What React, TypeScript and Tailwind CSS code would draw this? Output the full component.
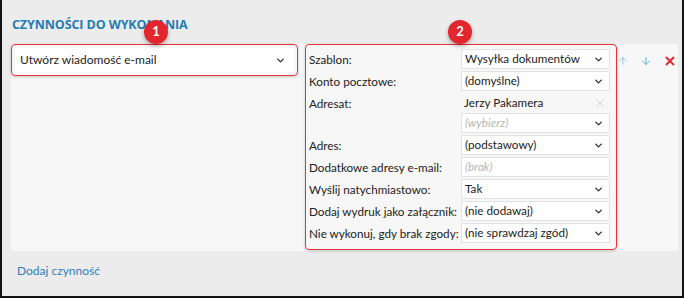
import { ChevronDown, ArrowUp, ArrowDown, X } from "lucide-react";

type Row = {
  label: string;
  value?: string;
  placeholder?: boolean;
  select?: boolean;
  plain?: boolean;
};

const rows: Row[] = [
  { label: "Szablon:", value: "Wysyłka dokumentów", select: true },
  { label: "Konto pocztowe:", value: "(domyślne)", select: true },
  { label: "Adresat:", value: "Jerzy Pakamera", plain: true },
  { label: "", value: "(wybierz)", placeholder: true, select: true },
  { label: "Adres:", value: "(podstawowy)", select: true },
  { label: "Dodatkowe adresy e-mail:", value: "(brak)", placeholder: true },
  { label: "Wyślij natychmiastowo:", value: "Tak", select: true },
  { label: "Dodaj wydruk jako załącznik:", value: "(nie dodawaj)", select: true },
  { label: "Nie wykonuj, gdy brak zgody:", value: "(nie sprawdzaj zgód)", select: true },
];

function Badge({ n }: { n: number }) {
  return (
    <div className="absolute w-[24px] h-[24px] rounded-full bg-[#e3262d] text-white text-[13px] font-bold flex items-center justify-center shadow-[0_2px_4px_rgba(0,0,0,0.3)]">
      {n}
    </div>
  );
}

function Field({ row }: { row: Row }) {
  if (row.plain) {
    return (
      <div className="h-[20px] flex items-center justify-between pl-[3px] pr-[3px] text-[#222]">
        <span>{row.value}</span>
        <X size={14} strokeWidth={1.1} className="text-[#c4c4c4]" />
      </div>
    );
  }
  return (
    <div className="h-[20px] bg-white border border-[#e3e3e3] flex items-center justify-between pl-[3px] pr-[5px]">
      <span className={row.placeholder ? "italic text-[#b5b5b5]" : "text-[#222]"}>{row.value}</span>
      {row.select && <ChevronDown size={11} strokeWidth={3} className="text-[#333]" />}
    </div>
  );
}

export default function App() {
  return (
    <div
      className="relative w-[684px] h-[298px] bg-[#ececec] border-x-2 border-b-2 border-[#111] text-[11.7px] overflow-hidden"
      style={{ fontFamily: 'Lato, "Open Sans", sans-serif' }}
    >
      <h2
        className="pl-[10px] pt-[17px] h-[44px] text-[12.5px] leading-[16px] font-bold text-[#1f7db5] tracking-[-0.1px]"
        style={{ fontFamily: '"Open Sans", sans-serif' }}
      >
        CZYNNOŚCI DO WYKONANIA
      </h2>

      <div className="ml-[9px] mr-[4px] h-[207px] bg-[#f7f7f7] flex items-start">
        {/* box 1 */}
        <div className="w-[287px] shrink-0 h-[32px] border-[1.5px] border-[#e8323a] rounded-[4px] p-[3px] shadow-[0_1px_3px_rgba(0,0,0,0.2)]">
          <div className="h-full bg-white flex items-center justify-between pl-[5px] pr-[8px] text-[#222] text-[12px]">
            <span>Utwórz wiadomość e-mail</span>
            <ChevronDown size={11} strokeWidth={3} className="text-[#333]" />
          </div>
        </div>

        {/* box 2 */}
        <div className="ml-[7px] w-[312px] shrink-0 h-[206px] border-[1.5px] border-[#e8323a] rounded-[4px] pt-[4px] pl-[3px] pr-[5px] shadow-[0_1px_3px_rgba(0,0,0,0.2)]">
          {rows.map((r, i) => (
            <div
              key={i}
              className={
                "grid grid-cols-[152px_149px] items-center " +
                (i === 3 ? "mt-0" : i === 0 ? "" : "mt-[2px]")
              }
            >
              <span className="text-[#222] leading-[20px] whitespace-nowrap">{r.label}</span>
              <Field row={r} />
            </div>
          ))}
        </div>

        {/* actions */}
        <div className="flex items-center gap-[11px] pt-[10px]">
          <ArrowUp size={12} strokeWidth={2} className="text-[#8fcde9]" />
          <ArrowDown size={12} strokeWidth={2} className="text-[#5fb0de]" />
          <X size={14} strokeWidth={3.2} className="text-[#e3262d]" />
        </div>
      </div>

      <div className="pl-[15px] pt-[11px] text-[12px] text-[#2f7fba]">Dodaj czynność</div>

      <div className="absolute left-[142px] top-[20px]">
        <Badge n={1} />
      </div>
      <div className="absolute left-[446px] top-[20px]">
        <Badge n={2} />
      </div>
    </div>
  );
}
